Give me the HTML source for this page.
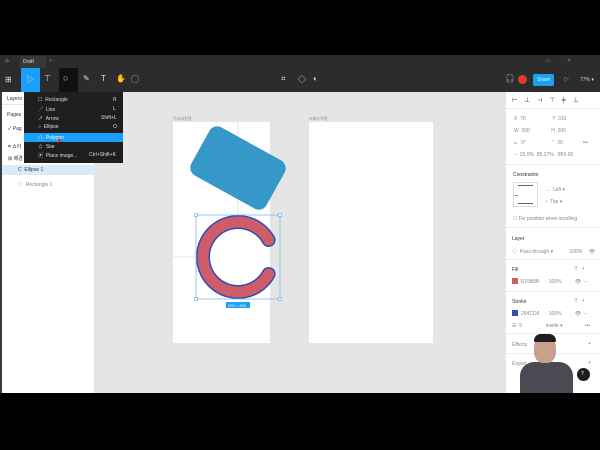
<!DOCTYPE html>
<html><head><style>
*{margin:0;padding:0;box-sizing:border-box}
body{width:600px;height:450px;background:#000;position:relative;overflow:hidden;font-family:"Liberation Sans","Noto Sans CJK KR",sans-serif;font-size:5px;color:#333}
.a{position:absolute}
.t{position:absolute;white-space:nowrap}
.w{color:#ddd}
.g{color:#888}
</style></head><body>
<!-- title bar -->
<div class="a" style="left:0;top:55px;width:600px;height:13px;background:#2c2c2c"></div>
<div class="a" style="left:20px;top:56px;width:26px;height:12px;background:#383838"></div>
<div class="t w" style="left:23px;top:59px">Draft</div>
<div class="t w" style="left:5px;top:58px;font-size:6px">⌂</div>
<div class="t g" style="left:49px;top:58px">+</div>
<div class="t g" style="left:567px;top:58px">✕</div>
<div class="t g" style="left:546px;top:58px">▭</div>
<!-- toolbar -->
<div class="a" style="left:0;top:68px;width:600px;height:24px;background:#2c2c2c"></div>
<div class="a" style="left:21px;top:68px;width:19px;height:24px;background:#18a0fb"></div>
<div class="a" style="left:59px;top:68px;width:19px;height:24px;background:#111"></div>
<div class="t w" style="left:5px;top:75px;font-size:8px">⊞</div>
<div class="t w" style="left:26px;top:74px;font-size:8px">▷</div>
<div class="t w" style="left:44px;top:74px;font-size:8px">⊤</div>
<div class="t w" style="left:63px;top:73px;font-size:9px">○</div>
<div class="t w" style="left:83px;top:74px;font-size:8px">✎</div>
<div class="t w" style="left:101px;top:74px;font-size:8px">T</div>
<div class="t w" style="left:116px;top:74px;font-size:8px">✋</div>
<div class="t w" style="left:131px;top:74px;font-size:8px">◯</div>
<div class="t w" style="left:281px;top:74px;font-size:8px">⌗</div>
<div class="t w" style="left:298px;top:74px;font-size:8px">◇</div>
<div class="t w" style="left:313px;top:74px;font-size:8px">◐</div>
<div class="t w" style="left:505px;top:74px;font-size:8px">🎧</div>
<div class="a" style="left:518px;top:75px;width:9px;height:9px;border-radius:50%;background:#e03a2a"></div>
<div class="a" style="left:533px;top:74px;width:21px;height:12px;border-radius:2px;background:#18a0fb"></div>
<div class="t" style="left:537px;top:77px;color:#fff">Share</div>
<div class="t w" style="left:564px;top:76px">▷</div>
<div class="t w" style="left:580px;top:77px">77% ▾</div>
<!-- left panel -->
<div class="a" style="left:0;top:92px;width:95px;height:301px;background:#fff;border-left:2px solid #3a3a4a;border-right:1px solid #e5e5e5"></div>
<div class="t" style="left:7px;top:96px">Layers</div>
<div class="a" style="left:2px;top:104px;width:92px;height:1px;background:#e5e5e5"></div>
<div class="t" style="left:7px;top:112px">Pages</div>
<div class="t" style="left:8px;top:125px">✓ Pag</div>
<div class="t" style="left:8px;top:143px">⌗ 쇼아</div>
<div class="t" style="left:8px;top:155px">⊞ 배경</div>
<div class="a" style="left:2px;top:165px;width:92px;height:10px;background:#daebf7"></div>
<div class="t" style="left:18px;top:167px">C &nbsp;Ellipse 1</div>
<div class="t g" style="left:18px;top:181px">◇ &nbsp;Rectangle 1</div>
<!-- canvas -->
<div class="a" style="left:95px;top:92px;width:410px;height:301px;background:#e5e5e5"></div>
<div class="t g" style="left:173px;top:116px;font-size:4px">히코씨쉬엔</div>
<div class="t g" style="left:309px;top:116px;font-size:4px">쓰레드텍엔</div>
<div class="a" style="left:173px;top:122px;width:97px;height:221px;background:#fff"></div>
<div class="a" style="left:309px;top:122px;width:124px;height:221px;background:#fff"></div>
<svg class="a" style="left:0;top:0" width="600" height="450">
<line x1="238" y1="122" x2="238" y2="215" stroke="#bcd6ea" stroke-width="0.6"/>
<line x1="173" y1="257" x2="196" y2="257" stroke="#bcd6ea" stroke-width="0.6"/>
<rect x="195" y="140.5" width="86" height="55" rx="9" fill="#3598c8" transform="rotate(29 238 168)"/>
<path d="M268.6 240 A35 35 0 1 0 268.6 274" fill="none" stroke="#2a4fb5" stroke-width="14" stroke-linecap="round"/>
<path d="M268.6 240 A35 35 0 1 0 268.6 274" fill="none" stroke="#d05c6a" stroke-width="11" stroke-linecap="round"/>
<rect x="196" y="215" width="84" height="84" fill="none" stroke="#6ab4e8" stroke-width="0.7"/>
<g fill="#fff" stroke="#6ab4e8" stroke-width="0.7"><rect x="194.5" y="213.5" width="3" height="3"/><rect x="278.5" y="213.5" width="3" height="3"/><rect x="194.5" y="297.5" width="3" height="3"/><rect x="278.5" y="297.5" width="3" height="3"/></g>
<rect x="226" y="302" width="24" height="6" fill="#18a0fb"/>
</svg>
<div class="t" style="left:228px;top:302.5px;color:#fff;font-size:4px">200 × 200</div>
<!-- dropdown menu -->
<div class="a" style="left:24px;top:92px;width:99px;height:71px;background:#1e1e1e"></div>
<div class="a" style="left:24px;top:133px;width:99px;height:9px;background:#18a0fb"></div>
<div class="t w" style="left:38px;top:97px">☐ &nbsp;Rectangle</div><div class="t w" style="left:113px;top:97px">R</div>
<div class="t w" style="left:38px;top:106px">╱ &nbsp;Line</div><div class="t w" style="left:113px;top:106px">L</div>
<div class="t w" style="left:38px;top:115px">↗ &nbsp;Arrow</div><div class="t w" style="left:101px;top:115px">Shift+L</div>
<div class="t w" style="left:38px;top:124px">○ &nbsp;Ellipse</div><div class="t w" style="left:113px;top:124px">O</div>
<div class="t" style="left:38px;top:134px;color:#fff">△ &nbsp;Polygon</div>
<div class="t" style="left:56px;top:136px;color:#e03a2a;font-size:8px">➤</div>
<div class="t w" style="left:38px;top:143px">☆ &nbsp;Star</div>
<div class="t w" style="left:38px;top:152px">▣ &nbsp;Place image...</div><div class="t w" style="left:89px;top:152px">Ctrl+Shift+K</div>
<!-- right panel -->
<div class="a" style="left:505px;top:92px;width:95px;height:301px;background:#fff;border-left:1px solid #e5e5e5"></div>
<div class="t" style="left:512px;top:95px;font-size:6px;letter-spacing:7px">⊢⊥⊣⊤╪⊥</div>
<div class="a" style="left:506px;top:108px;width:94px;height:1px;background:#eee"></div>
<div class="t g" style="left:514px;top:116px">X &nbsp;76 <span style="margin-left:25px">Y &nbsp;310</span></div>
<div class="t g" style="left:514px;top:128px">W &nbsp;200 <span style="margin-left:20px">H &nbsp;200</span></div>
<div class="t g" style="left:514px;top:140px">⊾ &nbsp;0° <span style="margin-left:25px">⌜ &nbsp;20</span><span style="margin-left:20px">•••</span></div>
<div class="t g" style="left:514px;top:152px">◔ &nbsp;25.0% &nbsp;85.27% &nbsp;&nbsp;850.00</div>
<div class="a" style="left:506px;top:164px;width:94px;height:1px;background:#eee"></div>
<div class="t" style="left:513px;top:172px">Constraints</div>
<div class="a" style="left:513px;top:182px;width:25px;height:25px;border:1px solid #ddd"></div>
<div class="a" style="left:518px;top:185px;width:15px;height:1px;background:#666"></div>
<div class="a" style="left:518px;top:203px;width:15px;height:1px;background:#666"></div>
<div class="a" style="left:515px;top:195px;width:3px;height:1px;background:#18a0fb"></div>
<div class="t g" style="left:545px;top:187px">↔ &nbsp;Left ▾</div>
<div class="t g" style="left:545px;top:199px">↕ &nbsp;Top ▾</div>
<div class="t g" style="left:513px;top:216px">☐ Fix position when scrolling</div>
<div class="a" style="left:506px;top:227px;width:94px;height:1px;background:#eee"></div>
<div class="t" style="left:512px;top:236px">Layer</div>
<div class="t g" style="left:512px;top:248px">◇ &nbsp;Pass through ▾ <span style="margin-left:15px">100%</span> <span style="margin-left:5px">👁</span></div>
<div class="a" style="left:506px;top:259px;width:94px;height:1px;background:#eee"></div>
<div class="t" style="left:512px;top:267px">Fill</div><div class="t g" style="left:574px;top:266px">⠿ &nbsp;&nbsp;+</div>
<div class="a" style="left:512px;top:278px;width:6px;height:6px;background:#d05c6a"></div>
<div class="t g" style="left:521px;top:279px">E15B5B <span style="margin-left:8px">100%</span> <span style="margin-left:12px">👁 &nbsp;−</span></div>
<div class="a" style="left:506px;top:291px;width:94px;height:1px;background:#eee"></div>
<div class="t" style="left:512px;top:299px">Stroke</div><div class="t g" style="left:574px;top:298px">⠿ &nbsp;&nbsp;+</div>
<div class="a" style="left:512px;top:310px;width:6px;height:6px;background:#2a4fb5"></div>
<div class="t g" style="left:521px;top:311px">254CD6 <span style="margin-left:8px">100%</span> <span style="margin-left:12px">👁 &nbsp;−</span></div>
<div class="t g" style="left:512px;top:323px">☰ &nbsp;5 <span style="margin-left:22px">Inside ▾</span><span style="margin-left:22px">•••</span></div>
<div class="a" style="left:506px;top:333px;width:94px;height:1px;background:#eee"></div>
<div class="t g" style="left:512px;top:342px">Effects</div><div class="t g" style="left:588px;top:341px">+</div>
<div class="a" style="left:506px;top:353px;width:94px;height:1px;background:#eee"></div>
<div class="t g" style="left:512px;top:361px">Export</div><div class="t g" style="left:588px;top:360px">+</div>
<!-- person -->
<div class="a" style="left:520px;top:362px;width:53px;height:31px;border-radius:14px 14px 0 0;background:#4a4a52"></div>
<div class="a" style="left:534px;top:335px;width:22px;height:28px;border-radius:45% 45% 40% 40%;background:#c9a08a"></div>
<div class="a" style="left:534px;top:334px;width:22px;height:8px;border-radius:10px 10px 2px 2px;background:#1e1e22"></div>
<div class="a" style="left:577px;top:368px;width:13px;height:13px;border-radius:50%;background:#1e1e1e"></div>
<div class="t" style="left:581px;top:371px;color:#fff">?</div>
</body></html>
